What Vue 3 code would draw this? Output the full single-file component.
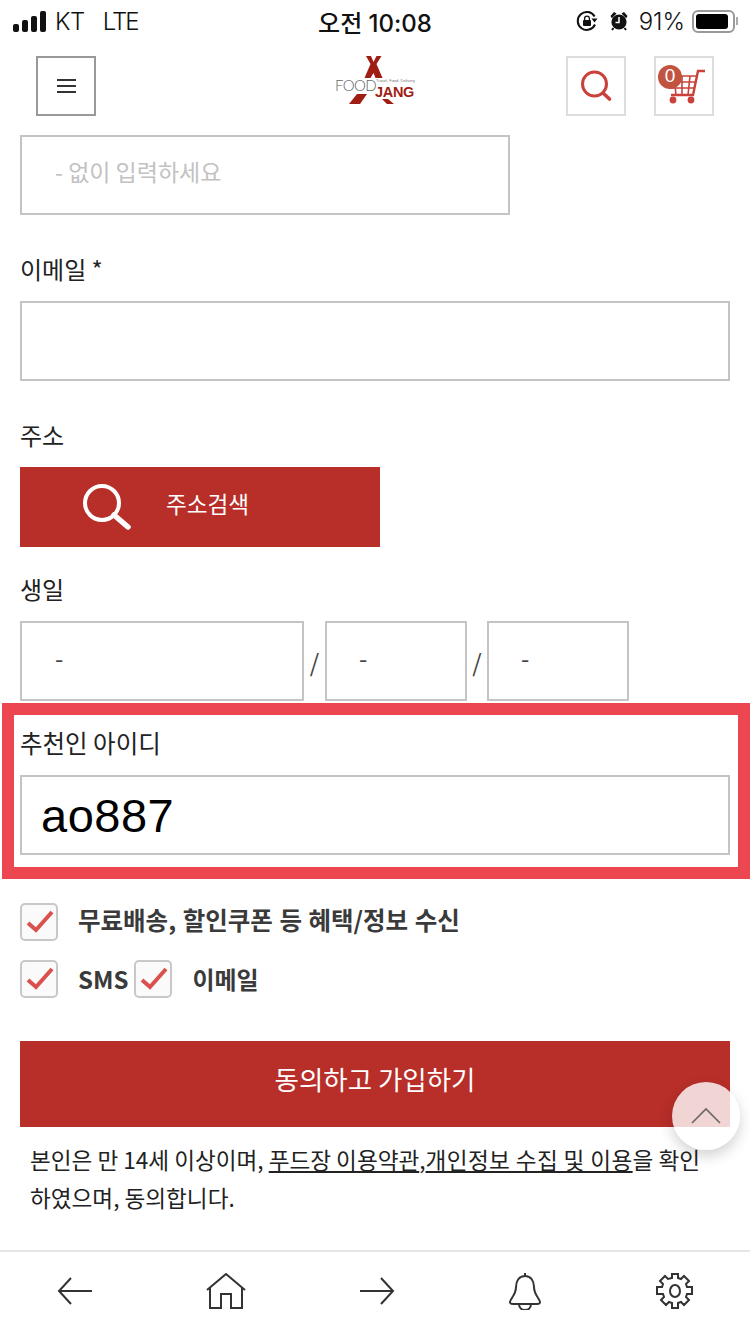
<template>
  <div class="page">
    <div class="statusbar">
      <div class="st-left">
        <span class="signal"><i></i><i></i><i></i><i></i></span>
        <span class="carrier">KT</span>
        <span class="carrier lte">LTE</span>
      </div>
      <div class="st-time">오전 10:08</div>
      <div class="st-right">
        <svg width="22" height="22" viewBox="0 0 22 22" fill="none">
          <path d="M19 14.5A9 9 0 1 1 18.6 6.5" stroke="#111" stroke-width="2" />
          <path d="M15.5 8.5h6l-3 4z" fill="#111" />
          <rect x="7" y="10" width="8" height="6" rx="1" fill="#111" />
          <path d="M8.6 10.5V8.6a2.4 2.4 0 0 1 4.8 0v1.900" stroke="#111" stroke-width="1.300" />
        </svg>
        <svg class="alarm" width="18" height="20" viewBox="0 0 18 20">
          <circle cx="9" cy="11" r="7.600" fill="#111" />
          <path d="M0.500 5 4 1 6.500 2.500 1.800 7.200zM17.500 5 14 1 11.500 2.500 16.200 7.200z" fill="#111" />
          <path d="M3.500 17 2 19M14.500 17 16 19" stroke="#111" stroke-width="2" />
          <path d="M9 6V11.500H5.500" stroke="#fff" stroke-width="1.500" fill="none" />
        </svg>
        <span class="pct">91%</span>
        <span class="battery"><b></b></span>
        <span class="nub"></span>
      </div>
    </div>

    <header class="topbar">
      <button class="menu-btn">
        <span></span><span></span><span></span>
      </button>
      <div class="logo">
        <svg class="logo-mark" width="82" height="56" viewBox="0 0 82 56">
          <path d="M32 6h5l2.500 6 3-6h5l-5 8 6 14h-7l-2-5-3 5h-6l6-14z" fill="#a01d14" />
          <path d="M23 44h10l-7 10H15zM48 49h6l6 5H53z" fill="#a01d14" />
        </svg>
        <span class="logo-food">FOOD</span>
        <span class="logo-tag">Travel, Food, Delivery</span>
        <span class="logo-jang">JANG</span>
      </div>
      <div class="top-actions">
        <button class="icon-btn">
          <svg width="34" height="34" viewBox="0 0 34 34" fill="none" stroke="#c9413a">
            <circle cx="15.500" cy="15" r="12" stroke-width="3" />
            <path d="M24 24l6.500 6" stroke-width="3.600" stroke-linecap="round" />
          </svg>
        </button>
        <button class="icon-btn cart-btn">
          <svg width="54" height="44" viewBox="0 0 54 44" fill="none" stroke="#c9413a" stroke-width="1.600">
            <path d="M48 7h-7l-5 24H14" stroke-width="2.400" />
            <path d="M10 12h30M11 18h28M12 24h26M17 12l2 19M25 12v19M33 12l-2 19" />
            <circle cx="16" cy="36" r="3.400" fill="#c9413a" stroke="none" />
            <circle cx="34" cy="36" r="3.400" fill="#c9413a" stroke="none" />
          </svg>
          <span class="badge">0</span>
        </button>
      </div>
    </header>

    <main class="form">
      <div class="input phone">- 없이 입력하세요</div>

      <label class="lbl email-lbl">이메일 *</label>
      <div class="input"></div>

      <label class="lbl addr-lbl">주소</label>
      <button class="addr-btn">
        <svg width="54" height="52" viewBox="0 0 54 52" fill="none" stroke="#fff">
          <circle cx="22" cy="22" r="17" stroke-width="4" />
          <path d="M34 34l14 12" stroke-width="5.500" stroke-linecap="round" />
        </svg>
        <span>주소검색</span>
      </button>

      <label class="lbl birth-lbl">생일</label>
      <div class="birth">
        <div class="input b1">-</div>
        <span class="slash">/</span>
        <div class="input b2">-</div>
        <span class="slash s2">/</span>
        <div class="input b2">-</div>
      </div>

      <section class="highlight">
        <label class="lbl">추천인 아이디</label>
        <div class="input ref-input">ao887</div>
      </section>

      <div class="checks">
        <div class="check-row">
          <span class="box"><svg width="38" height="38" viewBox="0 0 38 38"><path d="M8 20l8 7L32 9" fill="none" stroke="#d9504c" stroke-width="4" /></svg></span>
          <span class="check-text wide">무료배송, 할인쿠폰 등 혜택/정보 수신</span>
        </div>
        <div class="check-row">
          <span class="box"><svg width="38" height="38" viewBox="0 0 38 38"><path d="M8 20l8 7L32 9" fill="none" stroke="#d9504c" stroke-width="4" /></svg></span>
          <span class="check-text">SMS</span>
          <span class="box second"><svg width="38" height="38" viewBox="0 0 38 38"><path d="M8 20l8 7L32 9" fill="none" stroke="#d9504c" stroke-width="4" /></svg></span>
          <span class="check-text">이메일</span>
        </div>
      </div>

      <button class="submit">동의하고 가입하기</button>
      <p class="agree">본인은 만 14세 이상이며, <u>푸드장 이용약관</u>,<u class="terms">개인정보 수집 및 이용</u>을 확인<br />하였으며, 동의합니다.</p>
    </main>

    <button class="to-top">
      <svg width="30" height="18" viewBox="0 0 30 18" fill="none">
        <path d="M1 16 15 2l14 14" stroke="#6d6467" stroke-width="1.600" />
      </svg>
    </button>

    <nav class="bottom">
      <svg width="36" height="28" viewBox="0 0 36 28" fill="none" stroke="#333" stroke-width="2">
        <path d="M14 1 2 14l12 13M2 14h33" />
      </svg>
      <svg width="40" height="36" viewBox="0 0 40 36" fill="none" stroke="#333" stroke-width="2">
        <path d="M1 17 20 1l19 16M4 14v21h11V21h10v14h11V14" />
      </svg>
      <svg width="36" height="28" viewBox="0 0 36 28" fill="none" stroke="#333" stroke-width="2">
        <path d="M22 1l12 13-12 13M34 14H1" />
      </svg>
      <svg width="36" height="38" viewBox="0 0 36 38" fill="none" stroke="#333" stroke-width="2">
        <path d="M18 1v3M18 4c-6 0-9 5-9 11 0 8-6 12-6 15 0 2 1 2 3 2h24c2 0 3 0 3-2 0-3-6-7-6-15 0-6-3-11-9-11zM12 32c0 8 12 8 12 0" />
      </svg>
      <svg width="38" height="38" viewBox="0 0 38 38" fill="none" stroke="#333" stroke-width="2">
        <ellipse cx="19" cy="19" rx="5" ry="6" />
        <path d="M16 2h6v4l3 1 3-3 5 5-3 3 1 3h5v7h-5l-1 3 3 3-5 5-3-3-3 1v5h-6v-5l-3-1-3 3-5-5 3-3-1-3H1v-7h5l1-3-3-3 5-5 3 3 4-1z" />
      </svg>
    </nav>
  </div>
</template>

<script setup>
</script>

<style scoped>
.page {
  position: relative;
  width: 750px;
  height: 1334px;
  overflow: hidden;
  background: #fff;
  color: #222;
  font-family: "Noto Sans CJK KR", "Noto Sans", sans-serif;
}

.statusbar {
  height: 42px;
  display: grid;
  grid-template-columns: 1fr auto 1fr;
  align-items: center;
  color: #111;
  font-family: Inter, "Noto Sans CJK KR", sans-serif;
}
.st-left {
  display: flex;
  align-items: center;
  padding-left: 13px;
}
.signal {
  display: flex;
  align-items: flex-end;
  gap: 3px;
  height: 21px;
  margin-right: 9px;
}
.signal i {
  width: 6px;
  border-radius: 2px;
  background: #111;
}
.signal i:nth-child(1) { height: 8px; }
.signal i:nth-child(2) { height: 12px; }
.signal i:nth-child(3) { height: 16px; }
.signal i:nth-child(4) { height: 21px; }
.carrier {
  font-size: 24px;
  font-weight: 300;
  letter-spacing: -0.5px;
}
.lte {
  margin-left: 18px;
  letter-spacing: -2px;
}
.st-time {
  font-size: 24px;
  font-weight: 500;
}
.st-right {
  display: flex;
  align-items: center;
  justify-content: flex-end;
  padding-right: 12px;
}
.alarm {
  margin-left: 12px;
}
.pct {
  font-size: 24px;
  font-weight: 300;
  margin-left: 11px;
}
.battery {
  width: 43px;
  height: 23px;
  margin-left: 7px;
  border: 2px solid #999;
  border-radius: 6px;
  padding: 2px;
  box-sizing: border-box;
}
.battery b {
  display: block;
  width: 91%;
  height: 100%;
  border-radius: 3px;
  background: #000;
}
.nub {
  width: 2px;
  height: 8px;
  margin-left: 1px;
  background: #aaa;
}

.topbar {
  height: 92px;
  display: grid;
  grid-template-columns: 1fr auto 1fr;
  align-items: start;
  padding: 14px 36px 0;
  box-sizing: border-box;
}
.menu-btn {
  width: 60px;
  height: 60px;
  border: 2px solid #999;
  background: #fff;
  padding: 0;
  display: flex;
  flex-direction: column;
  align-items: center;
  justify-content: center;
  gap: 4px;
}
.menu-btn span {
  width: 19px;
  height: 2px;
  background: #333;
}
.logo {
  position: relative;
  width: 82px;
  height: 56px;
  margin-top: -6px;
}
.logo-mark {
  position: absolute;
  left: 0;
  top: 0;
}
.logo-food {
  position: absolute;
  left: 1px;
  top: 26px;
  font-family: Lato, sans-serif;
  font-size: 15px;
  font-weight: 300;
  letter-spacing: -0.6px;
  line-height: 18px;
  color: #666;
}
.logo-tag {
  position: absolute;
  left: 42px;
  top: 28px;
  font-family: "Liberation Sans", sans-serif;
  font-size: 4px;
  line-height: 6px;
  color: #777;
  white-space: nowrap;
}
.logo-jang {
  position: absolute;
  left: 41px;
  top: 34px;
  font-family: "Liberation Sans", sans-serif;
  font-size: 14.500px;
  line-height: 16px;
  font-weight: 700;
  color: #a01d14;
  letter-spacing: -0.3px;
}
.top-actions {
  display: flex;
  justify-content: flex-end;
  gap: 28px;
}
.icon-btn {
  position: relative;
  width: 60px;
  height: 60px;
  border: 2px solid #ddd;
  background: #fff;
  padding: 0;
  display: flex;
  align-items: center;
  justify-content: center;
}
.badge {
  position: absolute;
  left: 2px;
  top: 7px;
  width: 24px;
  height: 24px;
  border-radius: 50%;
  background: #c2533f;
  color: #fff;
  font-size: 19px;
  line-height: 22px;
  text-align: center;
  font-family: "Liberation Sans", sans-serif;
}

.form {
  padding: 1px 20px 0;
}
.input {
  height: 80px;
  border: 2px solid #c4c4c4;
  box-sizing: border-box;
  background: #fff;
  display: flex;
  align-items: center;
}
.phone {
  width: 490px;
  padding-left: 33px;
  padding-bottom: 8px;
  font-size: 23px;
  color: #c2c2c2;
}
.lbl {
  display: block;
  font-size: 24px;
  line-height: 36px;
  color: #222;
}
.email-lbl {
  margin-top: 36px;
  margin-bottom: 14px;
}
.addr-lbl {
  margin-top: 36px;
  margin-bottom: 14px;
}
.addr-btn {
  width: 360px;
  height: 80px;
  background: #b82e29;
  border: 0;
  padding: 0 0 0 60px;
  display: flex;
  align-items: center;
  color: #fff;
  font-family: inherit;
  font-size: 22.600px;
}
.addr-btn span {
  margin-left: 32px;
  padding-bottom: 8px;
}
.birth-lbl {
  margin-top: 24px;
  margin-bottom: 14px;
}
.birth {
  display: flex;
  align-items: center;
}
.birth .input {
  font-size: 24px;
  color: #444;
  padding-bottom: 8px;
}
.b1 {
  width: 284px;
  padding-left: 33px;
}
.b2 {
  width: 142px;
  padding-left: 32px;
}
.slash {
  width: 21px;
  text-align: center;
  font-size: 24px;
  color: #444;
}
.s2 {
  width: 20px;
}
.highlight {
  margin: 2px -20px 0 -18px;
  padding: 10px 8px 12px 6px;
  border: 12px solid #ec4750;
}
.highlight .lbl {
  margin-bottom: 14px;
  font-size: 24.500px;
}
.ref-input {
  padding-left: 19px;
  font-family: "Liberation Sans", sans-serif;
  font-size: 47px;
  letter-spacing: 0.5px;
  color: #000;
}
.checks {
  padding-top: 24px;
}
.check-row {
  display: flex;
  align-items: center;
  height: 38px;
  margin-bottom: 19px;
}
.box {
  width: 38px;
  height: 38px;
  box-sizing: border-box;
  border: 2px solid #c8c8c8;
  border-radius: 5px;
  display: flex;
  align-items: center;
  justify-content: center;
  background: #fafafa;
}
.box svg {
  flex: none;
}
.box.second {
  margin-left: 6px;
}
.check-text {
  margin-left: 20px;
  padding-bottom: 1px;
  font-size: 24px;
  font-weight: 700;
  color: #3a3a3a;
}
.check-text.wide {
  padding-bottom: 5px;
  font-size: 24.500px;
  word-spacing: 1px;
}
.submit {
  display: block;
  width: 710px;
  height: 86px;
  margin-top: 43px;
  padding: 0 0 12px;
  background: #b82e29;
  border: 0;
  color: #fff;
  font-family: inherit;
  font-size: 26.500px;
}
.agree {
  margin: 14px 0 0;
  padding-left: 10px;
  font-size: 22.600px;
  line-height: 38px;
  color: #222;
  white-space: nowrap;
}
.terms {
  letter-spacing: 0.4px;
}
.to-top {
  position: absolute;
  left: 672px;
  top: 1082px;
  width: 68px;
  height: 68px;
  border: 0;
  padding: 0;
  border-radius: 50%;
  background: rgba(255, 255, 255, 0.8);
  box-shadow: 0 6px 14px rgba(0, 0, 0, 0.18);
  display: flex;
  align-items: center;
  justify-content: center;
}
.bottom {
  position: absolute;
  left: 0;
  right: 0;
  top: 1250px;
  height: 84px;
  border-top: 2px solid #e6e6e6;
  box-sizing: border-box;
  display: flex;
  align-items: center;
  justify-content: space-between;
  padding: 0 56px 4px 57px;
  background: #fff;
}
</style>

<style>
html,
body {
  margin: 0;
  background: #fff;
}
</style>
